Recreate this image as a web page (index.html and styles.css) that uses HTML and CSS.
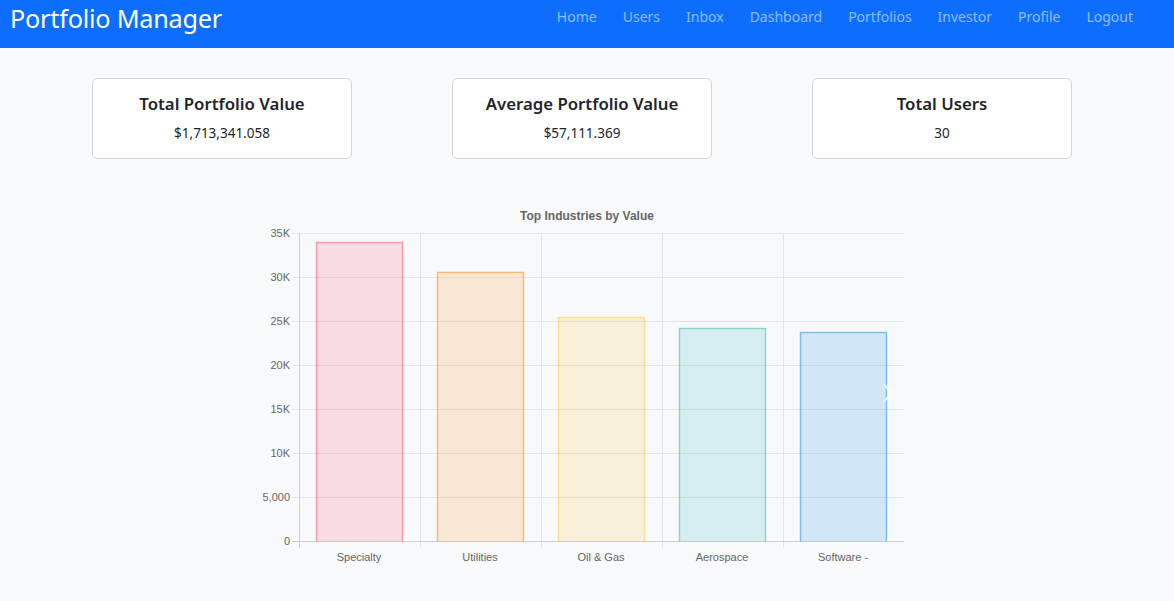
FILE: index.html
```html
<!DOCTYPE html>
<html lang="en">
<head>
<meta charset="utf-8">
<title>Portfolio Manager</title>
<link rel="stylesheet" href="styles.css">
</head>
<body>
<nav class="navbar">
  <a class="brand" href="#">Portfolio Manager</a>
  <ul class="nav-links">
    <li><a href="#">Home</a></li>
    <li><a href="#">Users</a></li>
    <li><a href="#">Inbox</a></li>
    <li><a href="#">Dashboard</a></li>
    <li><a href="#">Portfolios</a></li>
    <li><a href="#">Investor</a></li>
    <li><a href="#">Profile</a></li>
    <li><a href="#">Logout</a></li>
  </ul>
</nav>
<main>
  <section class="cards">
    <div class="card"><h3>Total Portfolio Value</h3><p>$1,713,341.058</p></div>
    <div class="card"><h3>Average Portfolio Value</h3><p>$57,111.369</p></div>
    <div class="card"><h3>Total Users</h3><p>30</p></div>
  </section>
  <section class="chart-wrap">
    <svg class="chart" width="680" height="372" viewBox="0 0 680 372" xmlns="http://www.w3.org/2000/svg">
      <text class="ctitle" x="340" y="20" text-anchor="middle">Top Industries by Value</text>
      <g stroke="#e5e5e5" stroke-width="1">
        <line x1="45" y1="33.5" x2="657" y2="33.5"/>
        <line x1="45" y1="77.5" x2="657" y2="77.5"/>
        <line x1="45" y1="121.5" x2="657" y2="121.5"/>
        <line x1="45" y1="165.5" x2="657" y2="165.5"/>
        <line x1="45" y1="209.5" x2="657" y2="209.5"/>
        <line x1="45" y1="253.5" x2="657" y2="253.5"/>
        <line x1="45" y1="297.5" x2="657" y2="297.5"/>
      </g>
      <g stroke="#e5e5e5" stroke-width="1">
        <line x1="173.5" y1="33" x2="173.5" y2="348"/>
        <line x1="294.5" y1="33" x2="294.5" y2="348"/>
        <line x1="415.5" y1="33" x2="415.5" y2="348"/>
        <line x1="536.5" y1="33" x2="536.5" y2="348"/>
      </g>
      <g stroke="#d0d0d0" stroke-width="1">
        <line x1="52.5" y1="33" x2="52.5" y2="348"/>
        <line x1="45" y1="341.5" x2="657" y2="341.5"/>
      </g>
      <g class="ylab" text-anchor="end">
        <text x="43" y="37">35K</text>
        <text x="43" y="81">30K</text>
        <text x="43" y="125">25K</text>
        <text x="43" y="169">20K</text>
        <text x="43" y="213">15K</text>
        <text x="43" y="257">10K</text>
        <text x="43" y="301">5,000</text>
        <text x="43" y="345">0</text>
      </g>
      <g stroke-width="1.5">
        <rect x="69.5" y="42.5" width="86" height="299" fill="rgba(255,99,132,0.2)"/>
        <path d="M69.5 341.5 V42.5 H155.5 V341.5" fill="none" stroke="rgb(255,99,132)" stroke-opacity="0.6"/>
        <rect x="190.5" y="72.5" width="86" height="269" fill="rgba(255,159,64,0.2)"/>
        <path d="M190.5 341.5 V72.5 H276.5 V341.5" fill="none" stroke="rgb(255,159,64)" stroke-opacity="0.7"/>
        <rect x="311.5" y="117.5" width="86" height="224" fill="rgba(255,205,86,0.2)"/>
        <path d="M311.5 341.5 V117.5 H397.5 V341.5" fill="none" stroke="rgb(255,205,86)" stroke-opacity="0.6"/>
        <rect x="432.5" y="128.5" width="86" height="213" fill="rgba(75,192,192,0.2)"/>
        <path d="M432.5 341.5 V128.5 H518.5 V341.5" fill="none" stroke="rgb(75,192,192)" stroke-opacity="0.6"/>
        <rect x="553.5" y="132.5" width="86" height="209" fill="rgba(54,162,235,0.2)"/>
        <path d="M553.5 341.5 V132.5 H639.5 V341.5" fill="none" stroke="rgb(54,162,235)" stroke-opacity="0.6"/>
      </g>
      <g class="xlab" text-anchor="middle">
        <text x="112" y="361">Specialty</text>
        <text x="233" y="361">Utilities</text>
        <text x="354" y="361">Oil &amp; Gas</text>
        <text x="475" y="361">Aerospace</text>
        <text x="596" y="361">Software -</text>
      </g>
      <path d="M637 184 L644 193 L637 202" fill="none" stroke="#ffffff" stroke-width="1.5" stroke-opacity="0.9"/>
    </svg>
  </section>
</main>
</body>
</html>
```

FILE: styles.css
```css
* { box-sizing: border-box; }
html, body { margin: 0; padding: 0; }
body {
  background: #f8f9fa;
  font-family: "Noto Sans", "Open Sans", "DejaVu Sans", sans-serif;
  color: #212529;
  width: 1174px;
  height: 601px;
  overflow: hidden;
}
.navbar {
  height: 48px;
  background: #0d6efd;
  display: flex;
  align-items: flex-start;
  justify-content: space-between;
  padding: 0 41px 0 10px;
}
.brand {
  color: #ffffff;
  text-decoration: none;
  font-size: 25.2px;
  line-height: 36px;
  letter-spacing: -0.2px;
}
.nav-links {
  list-style: none;
  margin: 0;
  padding: 0;
  display: flex;
  gap: 26px;
}
.nav-links a {
  display: block;
  color: rgba(255, 255, 255, 0.55);
  text-decoration: none;
  font-size: 14px;
  line-height: 34px;
}
.cards {
  display: flex;
  gap: 100px;
  padding: 30px 0 0 92px;
}
.card {
  width: 260px;
  height: 81px;
  background: #ffffff;
  border: 1px solid #d3d6d9;
  border-radius: 5px;
  text-align: center;
  padding-top: 13px;
}
.card h3 {
  margin: 0;
  font-size: 16.8px;
  font-weight: 600;
  line-height: 24px;
}
.card p {
  margin: 7px 0 0;
  font-size: 13.5px;
  line-height: 20px;
}
.chart-wrap {
  display: flex;
  justify-content: center;
  padding-top: 41px;
}
.chart { display: block; }
.chart text { font-family: "Liberation Sans", Arial, sans-serif; }
.ctitle { font-size: 12px; font-weight: 700; fill: #666666; }
.ylab text, .xlab text { font-size: 11px; fill: #666666; }
```
